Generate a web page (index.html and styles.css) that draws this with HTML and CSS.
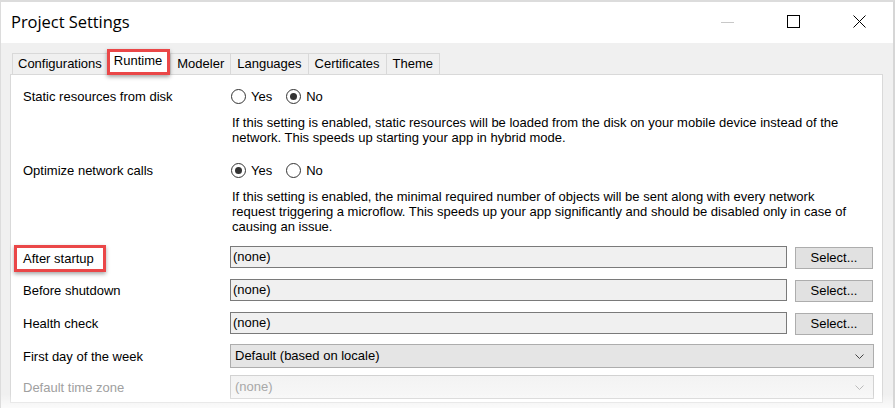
FILE: index.html
```html
<!DOCTYPE html>
<html>
<head>
<meta charset="utf-8">
<link rel="stylesheet" href="styles.css">
</head>
<body>
<div class="window">
  <div class="titlebar">
    <div class="title">Project Settings</div>
    <div class="winbtns">
      <span class="wb"><svg width="14" height="14" viewBox="0 0 14 14"><line x1="0" y1="7.5" x2="13" y2="7.5" stroke="#c8c8c8" stroke-width="1"/></svg></span>
      <span class="wb"><svg width="14" height="14" viewBox="0 0 14 14"><rect x="0.5" y="0.5" width="12" height="12" fill="none" stroke="#000" stroke-width="1"/></svg></span>
      <span class="wb"><svg width="14" height="14" viewBox="0 0 14 14"><path d="M0.5 0.5 L12.5 12.5 M12.5 0.5 L0.5 12.5" stroke="#000" stroke-width="1"/></svg></span>
    </div>
  </div>
  <div class="body">
    <div class="tabs">
      <div class="tab">Configurations</div>
      <div class="tab sel">Runtime</div>
      <div class="tab">Modeler</div>
      <div class="tab">Languages</div>
      <div class="tab">Certificates</div>
      <div class="tab">Theme</div>
    </div>
    <div class="panel">
      <div class="row r1">
        <div class="label">Static resources from disk</div>
        <div class="ctrl radios">
          <span class="radio"></span><span class="rlabel">Yes</span>
          <span class="radio on"></span><span class="rlabel">No</span>
        </div>
      </div>
      <div class="desc">If this setting is enabled, static resources will be loaded from the disk on your mobile device instead of the<br>network. This speeds up starting your app in hybrid mode.</div>
      <div class="row r2">
        <div class="label">Optimize network calls</div>
        <div class="ctrl radios">
          <span class="radio on"></span><span class="rlabel">Yes</span>
          <span class="radio"></span><span class="rlabel">No</span>
        </div>
      </div>
      <div class="desc">If this setting is enabled, the minimal required number of objects will be sent along with every network<br>request triggering a microflow. This speeds up your app significantly and should be disabled only in case of<br>causing an issue.</div>
      <div class="row field first">
        <div class="label"><span class="hl">After startup</span></div>
        <div class="ctrl pick"><div class="input">(none)</div><div class="btn">Select...</div></div>
      </div>
      <div class="row field">
        <div class="label">Before shutdown</div>
        <div class="ctrl pick"><div class="input">(none)</div><div class="btn">Select...</div></div>
      </div>
      <div class="row field">
        <div class="label">Health check</div>
        <div class="ctrl pick"><div class="input">(none)</div><div class="btn">Select...</div></div>
      </div>
      <div class="row field">
        <div class="label">First day of the week</div>
        <div class="ctrl"><div class="select">Default (based on locale)<svg class="chev" width="9" height="5" viewBox="0 0 9 5"><path d="M0.5 0.5 L4.5 4.5 L8.5 0.5" fill="none" stroke="#444" stroke-width="1"/></svg></div></div>
      </div>
      <div class="row field last">
        <div class="label dis">Default time zone</div>
        <div class="ctrl"><div class="select disabled">(none)<svg class="chev" width="9" height="5" viewBox="0 0 9 5"><path d="M0.5 0.5 L4.5 4.5 L8.5 0.5" fill="none" stroke="#bbb" stroke-width="1"/></svg></div></div>
      </div>
    </div>
  </div>
  <div class="fade"></div>
</div>
</body>
</html>
```

FILE: styles.css
```css
html, body {
  margin: 0;
  padding: 0;
  width: 895px;
  height: 408px;
  overflow: hidden;
  background: #ffffff;
  font-family: "Liberation Sans", Arial, sans-serif;
  font-size: 13px;
  color: #000;
}
.window {
  position: relative;
  width: 895px;
  height: 408px;
  box-sizing: border-box;
  border-top: 2px solid #dcdcdc;
  border-left: 1px solid #dcdcdc;
  border-right: 2px solid #d6d6d6;
  background: #f0f0f0;
  display: flex;
  flex-direction: column;
}
.titlebar {
  height: 41px;
  background: #fff;
  display: flex;
  align-items: center;
  justify-content: space-between;
  flex-shrink: 0;
}
.title {
  font-family: "Open Sans", "Liberation Sans", sans-serif;
  font-size: 16.5px;
  margin-left: 10px;
  margin-top: -2px;
  color: #000;
  letter-spacing: -0.05px;
}
.winbtns {
  display: flex;
  margin-right: 26px;
  gap: 52px;
  margin-top: -2px;
}
.wb {
  width: 14px;
  height: 14px;
  display: block;
}
.wb svg { display: block; }
.body {
  padding: 7px 0 0 9px;
  display: flex;
  flex-direction: column;
  flex: 1;
}
.tabs {
  display: flex;
  align-items: flex-end;
  height: 24px;
  padding-left: 2px;
}
.tab {
  box-sizing: border-box;
  height: 21px;
  border: 1px solid #d9d9d9;
  border-bottom: none;
  margin-left: -1px;
  padding: 0 6px 0 6px;
  line-height: 20px;
  background: #f0f0f0;
  white-space: nowrap;
}
.tab:first-child { margin-left: 0; padding: 0 5px 0 5px; }
.tab.sel {
  position: relative;
  z-index: 2;
  height: 26px;
  margin-bottom: -1px;
  border: 3px solid #ea4748;
  background: #fff;
  padding: 0 5px 0 4px;
  line-height: 18px;
  margin-left: -1px;
  margin-right: 0px;
  box-shadow: 0 2px 4px rgba(0,0,0,0.35);
}
.tab.sel + .tab { margin-left: 0; }
.panel {
  width: 873px;
  height: 329px;
  box-sizing: border-box;
  background: #fff;
  border: 1px solid #d9d9d9;
  padding: 10px 9px 0 12px;
}
.row {
  display: flex;
  align-items: center;
  height: 22px;
}
.label {
  width: 207px;
  flex-shrink: 0;
  white-space: nowrap;
}
.ctrl {
  flex: 1;
  display: flex;
  align-items: center;
}
.radios .radio {
  width: 13px;
  height: 13px;
  border: 1px solid #333;
  border-radius: 50%;
  box-sizing: content-box;
  position: relative;
  margin-left: 1px;
  background: #fff;
}
.radios .radio.on::after {
  content: "";
  position: absolute;
  left: 3px;
  top: 3px;
  width: 7px;
  height: 7px;
  border-radius: 50%;
  background: #333;
}
.radios .rlabel {
  margin-left: 5px;
  margin-right: 13px;
}
.desc {
  margin: 8px 0 0 209px;
  line-height: 15px;
  color: #000;
  white-space: nowrap;
}
.r2 { margin-top: 14px; }
.field { margin-top: 11px; }
.field.first { margin-top: 12px; }
.hl {
  display: inline-block;
  margin-left: -9px;
  padding: 3px 9px 3px 6px;
  border: 3px solid #ea4748;
  box-shadow: 0 2px 4px rgba(0,0,0,0.35);
  margin-top: 3px;
}
.pick { gap: 8px; }
.input {
  width: 557px;
  height: 22px;
  box-sizing: border-box;
  border: 1px solid #7a7a7a;
  background: #f0f0f0;
  line-height: 20px;
  padding-left: 2px;
}
.btn {
  width: 78px;
  height: 22px;
  box-sizing: border-box;
  border: 1px solid #adadad;
  background: #e1e1e1;
  text-align: center;
  line-height: 20px;
  margin-top: 2px;
}
.select {
  width: 644px;
  height: 24px;
  box-sizing: border-box;
  border: 1px solid #adadad;
  background: #e5e5e5;
  line-height: 22px;
  padding-left: 4px;
  display: flex;
  align-items: center;
  justify-content: space-between;
  padding-right: 9px;
}
.select.disabled {
  border-color: #d2d2d2;
  background: linear-gradient(#f3f3f3, #f7f7f7);
  color: #a8a8a8;
}
.field.last { margin-top: 9px; }
.label.dis { color: #a0a0a0; }
.chev { display: block; }
.fade {
  position: absolute;
  left: 0;
  right: 0;
  bottom: 0;
  height: 14px;
  background: linear-gradient(rgba(255,255,255,0), rgba(255,255,255,0.7));
  pointer-events: none;
}
```
